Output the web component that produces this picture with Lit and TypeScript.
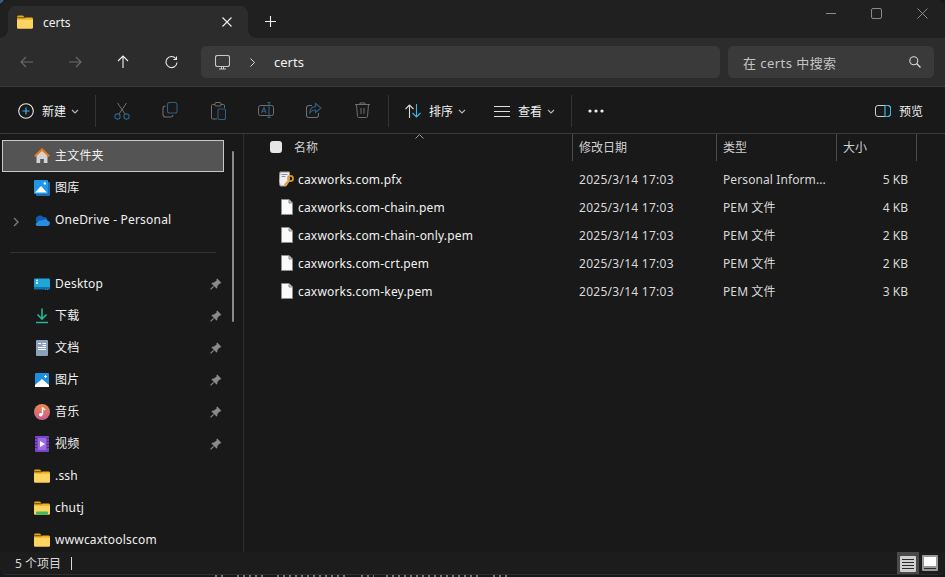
import { LitElement, html, css, svg, nothing } from 'lit';
import { customElement } from 'lit/decorators.js';

// ── Explorer window ───────────────────────────────────────────────────────────

const blue = '#3fb2e8';
const i = (w: number, h: number, body: unknown) =>
  html`<svg width=${w} height=${h} viewBox="0 0 ${w} ${h}" fill="none">${body}</svg>`;

const folderIcon = (badge = false) =>
  i(16, 14, svg`
    <path d="M0 2.2C0 1 .8.4 1.8.4h3.4c.8 0 1.2.5 1.9 1.3L8 2.6H0z" fill="#e8a50c"/>
    <path d="M0 3.4h14.4c.9 0 1.6.7 1.6 1.5v7.3c0 1-.7 1.6-1.6 1.6H1.600C.7 13.800 0 13.200 0 12.200z" fill="#fcd462"/>
    <path d="M0 3.4h7.2l1.4-1H14.400c.9 0 1.600.6 1.600 1.400v1H0z" fill="#f2b31f"/>
    ${badge ? svg`<rect x="2" y="10.6" width="12" height="3.2" rx="1" fill="#42b85a"/>` : nothing}
  `);

const fileIcon = i(12, 16, svg`
  <path d="M.5.5h7.5l3.5 3.5v11.5H.5z" fill="#fafafa" stroke="#8d8d8d"/>
  <path d="M8 .8V4h3.2" fill="#c9c9c9" stroke="#8d8d8d"/>
`);

const certIcon = i(15, 16, svg`
  <path d="M1 1h9.5v9L7 15H1.200L0 10z" fill="#efefef" stroke="#a09a8a"/>
  <path d="M2.500 3.500h6M2.500 5.500h4" stroke="#7f93c0"/>
  <circle cx="11.500" cy="7.500" r="2.600" stroke="#e19a22" stroke-width="1.600"/>
  <path d="M9.800 9.500 5.500 14M7 11.500l1.500 1.500M5.800 13l1.200 1.200" stroke="#e19a22" stroke-width="1.500"/>
`);

const pin = i(12, 12, svg`
  <path d="M7.200.6 11.400 4.800 10.400 5.600 9.600 5.400 7.400 8 7.300 10 6.500 10.500 1.500 5.500 2 4.700 4 4.600 6.600 2.400 6.400 1.600z" fill="#8a8a8a"/>
  <path d="M3.600 8.400.6 11.400" stroke="#8a8a8a" stroke-width="1.200"/>
`);

const chevron = i(8, 5, svg`<path d="M1 1l3 3 3-3" stroke="#b8b8b8" stroke-width="1.100"/>`);

const homeIcon = i(16, 16, svg`
  <path d="M2.500 7.500 8 2.500l5.500 5V15H9.800v-4H6.200v4H2.500z" fill="#d3d3d3"/>
  <path d="M.8 8.300 8 1.500l7.200 6.800" stroke="#e9791c" stroke-width="2"/>
`);

const galleryIcon = i(16, 16, svg`
  <rect x="2" y="2" width="14" height="14" rx="1" fill="#1f6fb5"/>
  <rect width="14" height="14" rx="1" fill="#2196e6"/>
  <path d="M1 12.500 7 6l6 6.500z" fill="#fff"/>
  <circle cx="10.800" cy="3.400" r="1.200" fill="#fff"/>
`);

const cloudIcon = i(16, 11, svg`
  <path d="M2.500 7a4 4 0 0 1 6.800-4.800 3.500 3.500 0 0 1 4 2.800L6 10z" fill="#0f5fb0"/>
  <path d="M3 11h10.500a2.500 2.500 0 0 0 .6-4.900 3.300 3.300 0 0 0-5.200-.8L6.500 5.500a2.900 2.900 0 0 0-2.900 1.800A1.900 1.900 0 0 0 3 11z" fill="#2a8ee0"/>
`);

const desktopIcon = i(16, 12, svg`
  <rect y=".5" width="16" height="10.500" rx="1" fill="#1fa6d8"/>
  <rect y="9" width="16" height="2.500" fill="#0d76a8"/>
  <path d="M2 2.500h2M2 5h2" stroke="#fff" stroke-width="1.400"/>
  <rect x="11" y="11.500" width="1" height="1" fill="#bbb"/><rect x="13" y="11.500" width="1" height="1" fill="#bbb"/>
`);

const downloadIcon = i(12, 16, svg`
  <path d="M6 .5v10M1.500 6.500 6 11l4.500-4.500" stroke="#27b592" stroke-width="1.600"/>
  <path d="M0 14.500h12" stroke="#27b592" stroke-width="1.500"/>
`);

const docIcon = i(12, 16, svg`
  <rect width="12" height="16" rx="1" fill="#8ba2bd"/>
  <path d="M2 3.500h3M6.500 3.500h3.500M6.500 5.500h3.500M2 7.500h8M2 9.500h8" stroke="#fff"/>
`);

const pictureIcon = i(14, 14, svg`
  <rect width="14" height="14" rx="1" fill="#1d8fe0"/>
  <path d="M0 12 7 6l7 6v2H0z" fill="#fff"/>
  <path d="M10.500 2v3M9 3.500h3" stroke="#fff"/>
`);

const musicIcon = i(16, 16, svg`
  <defs><linearGradient id="mu" x1="0" y1="0" x2="0" y2="1"><stop offset="0" stop-color="#e98a4a"/><stop offset="1" stop-color="#c85a96"/></linearGradient></defs>
  <circle cx="8" cy="8" r="8" fill="url(#mu)"/>
  <path d="M8.500 3.500v7" stroke="#fff" stroke-width="1.400"/>
  <circle cx="6.800" cy="10.800" r="1.800" fill="#fff"/>
  <path d="M8.500 3.500c.5 1.500 2 1.500 2.500 2.500" stroke="#fff" stroke-width="1.200"/>
`);

const videoIcon = i(14, 16, svg`
  <rect width="14" height="16" rx="1" fill="#7a45c8"/>
  <rect x="3" y="2" width="8" height="12" fill="#9a6be0"/>
  <path d="M5 5l5 3-5 3z" fill="#fff"/>
  <path d="M1 2v1M1 5v1M1 8v1M1 11v1M13 2v1M13 5v1M13 8v1M13 11v1" stroke="#2c1a55" stroke-width="1.200"/>
`);

const sideTop = [
  { name: '主文件夹', icon: homeIcon, selected: true },
  { name: '图库', icon: galleryIcon },
  { name: 'OneDrive - Personal', icon: cloudIcon, expand: true },
];

const sideQuick = [
  { name: 'Desktop', icon: desktopIcon, pinned: true },
  { name: '下载', icon: downloadIcon, pinned: true },
  { name: '文档', icon: docIcon, pinned: true },
  { name: '图片', icon: pictureIcon, pinned: true },
  { name: '音乐', icon: musicIcon, pinned: true },
  { name: '视频', icon: videoIcon, pinned: true },
  { name: '.ssh', icon: folderIcon() },
  { name: 'chutj', icon: folderIcon(true) },
  { name: 'wwwcaxtoolscom', icon: folderIcon() },
];

const files = [
  { name: 'caxworks.com.pfx', icon: certIcon, type: 'Personal Inform...', size: '5 KB' },
  { name: 'caxworks.com-chain.pem', icon: fileIcon, type: 'PEM 文件', size: '4 KB' },
  { name: 'caxworks.com-chain-only.pem', icon: fileIcon, type: 'PEM 文件', size: '2 KB' },
  { name: 'caxworks.com-crt.pem', icon: fileIcon, type: 'PEM 文件', size: '2 KB' },
  { name: 'caxworks.com-key.pem', icon: fileIcon, type: 'PEM 文件', size: '3 KB' },
];

// tips of whatever sits behind the window, showing below its bottom edge
const behind = [10, 28, 72, 13, 95, 15];

const dim = '#6f6f6f';
const dimBlue = '#2c5f80';
const toolIcons = [
  i(16, 18, svg`<path d="M3.500 1 11 12M12.500 1 5 12" stroke="${dim}"/><circle cx="3.500" cy="14.500" r="2.600" stroke="${dimBlue}" stroke-width="1.200"/><circle cx="12.500" cy="14.500" r="2.600" stroke="${dimBlue}" stroke-width="1.200"/>`),
  i(16, 16, svg`<rect x="5.500" y=".5" width="9.500" height="10.500" rx="2" stroke="${dimBlue}" stroke-width="1.100"/><path d="M3.500 4A2.500 2.500 0 0 0 1 6.500v6A2.500 2.500 0 0 0 3.500 15h5.500A2.500 2.500 0 0 0 11 13" stroke="${dim}" stroke-width="1.100"/>`),
  i(15, 18, svg`<path d="M4 2.500H1.500A1 1 0 0 0 .5 3.500V16a1 1 0 0 0 1 1H6M10 2.500h2.500a1 1 0 0 1 1 1V6" stroke="${dim}"/><rect x="4" y=".5" width="6" height="3.500" rx="1" stroke="${dim}"/><rect x="7" y="7" width="7.500" height="10.500" rx="1.500" stroke="${dimBlue}" stroke-width="1.100"/>`),
  i(16, 16, svg`<rect x=".5" y="3.500" width="15" height="10" rx="2" stroke="${dim}"/><path d="M3.500 11 6 5.500 8 11M4.300 9.200h3.200" stroke="${dimBlue}" stroke-width="1.100"/><path d="M11 1v14M9.500 .5h3M9.500 15.500h3" stroke="${dimBlue}" stroke-width="1.100"/>`),
  i(16, 16, svg`<path d="M6 3.500H3A2.500 2.500 0 0 0 .5 6v7A2.500 2.500 0 0 0 3 15.500h7a2.500 2.500 0 0 0 2.500-2.500v-2" stroke="${dim}" stroke-width="1.100"/><path d="M9.500 1.500 15 6l-5.500 4.500V8C7 8 5 9 3.500 11.500 4 7 6.500 4.500 9.500 4.500z" stroke="${dimBlue}" stroke-width="1.100"/>`),
  i(15, 16, svg`<path d="M0 2.500h15M5 2.500V1h5v1.500M1.500 2.500l1 12a1 1 0 0 0 1 1h8a1 1 0 0 0 1-1l1-12M6 6v6M9 6v6" stroke="${dim}"/>`),
];

@customElement('app-root')
export class AppRoot extends LitElement {
  static styles = css`
    :host {
      display: block;
      width: 945px;
      height: 577px;
      overflow: hidden;
      background: radial-gradient(circle at 0 0, #3a5a8a 3px, #191919 4px);
      font-family: 'Noto Sans', 'Noto Sans CJK SC', sans-serif;
      font-size: 12px;
      color: #f0f0f0;
    }
    svg { display: block; flex: none; }
    .window {
      height: 575px;
      box-sizing: border-box;
      display: flex;
      flex-direction: column;
      border-radius: 8px;
      border-bottom: 1px solid #2e2e2e;
      overflow: hidden;
      background: #191919;
    }

    /* title bar */
    .titlebar {
      height: 38px;
      flex: none;
      display: flex;
      background: #202020;
      padding-left: 8px;
    }
    .tab {
      position: relative;
      margin-top: 6px;
      width: 240px;
      height: 32px;
      box-sizing: border-box;
      padding: 0 16px 0 9px;
      display: flex;
      align-items: center;
      background: #2c2c2c;
      border-radius: 8px 8px 0 0;
    }
    .tab::before,
    .tab::after {
      content: '';
      position: absolute;
      bottom: 0;
      width: 8px;
      height: 8px;
    }
    .tab::before {
      left: -8px;
      background: radial-gradient(circle at 0 0, #202020 7.5px, #2c2c2c 8px);
    }
    .tab::after {
      right: -8px;
      background: radial-gradient(circle at 100% 0, #202020 7.5px, #2c2c2c 8px);
    }
    .tab .label { margin-left: 10px; flex: 1; }
    .newtab { margin: 16px 0 0 17px; }
    .wincontrols {
      margin-left: auto;
      display: flex;
      gap: 35px;
      padding: 8px 17px 0 0;
    }
    .minimize { padding-top: 5px; }

    /* navigation bar */
    .nav {
      height: 48px;
      flex: none;
      display: flex;
      align-items: center;
      background: #2c2c2c;
      border-bottom: 1px solid #3a3a3a;
      padding-left: 3px;
    }
    .navbtn { width: 48px; display: flex; justify-content: center; }
    .address {
      margin-left: 6px;
      width: 519px;
      height: 32px;
      box-sizing: border-box;
      padding-left: 14px;
      display: flex;
      align-items: center;
      background: #3a3a3a;
      border-radius: 5px;
      font-size: 13px;
    }
    .address .sep { margin: 0 19px 0 20px; }
    .search {
      margin-left: 8px;
      width: 206px;
      height: 32px;
      box-sizing: border-box;
      padding: 0 13px 0 15px;
      display: flex;
      align-items: center;
      justify-content: space-between;
      background: #3a3a3a;
      border-radius: 5px;
      font-size: 13px;
      letter-spacing: 0.45px;
      color: #c4c4c4;
    }

    /* command bar */
    .toolbar {
      height: 47px;
      flex: none;
      display: flex;
      align-items: center;
      background: #191919;
      border-bottom: 1px solid #3a3a3a;
      padding: 2px 0 0 18px;
      box-sizing: border-box;
    }
    .cmd { display: flex; align-items: center; flex: none; }
    .cmd.new { width: 77px; }
    .cmd.sort { width: 89px; margin-left: 16px; }
    .cmd.view { width: 77px; }
    .cmd .text { margin: 0 5px 0 8px; }
    .vsep { width: 1px; height: 32px; background: #333; flex: none; }
    .tools { display: flex; padding: 0 2px; }
    .toolbtn { width: 48px; display: flex; justify-content: center; flex: none; }
    .more { margin-left: 16px; }
    .preview { margin-left: auto; margin-right: 22px; display: flex; align-items: center; gap: 8px; }

    /* body */
    .main { flex: 1; min-height: 0; display: flex; }
    .sidebar {
      width: 244px;
      flex: none;
      box-sizing: border-box;
      border-right: 1px solid #2e2e2e;
      padding: 6px 0 0 2px;
      overflow: hidden;
      position: relative;
    }
    .siderow {
      width: 222px;
      height: 32px;
      box-sizing: border-box;
      display: flex;
      align-items: center;
      padding-left: 32px;
      position: relative;
    }
    .siderow.selected {
      background: #545454;
      border: 1px solid #c8c8c8;
      padding-left: 31px;
    }
    .siderow .icon { width: 16px; display: flex; justify-content: center; flex: none; }
    .siderow .label { margin-left: 5px; flex: 1; transform: translateY(-1px); letter-spacing: 0.2px; }
    .siderow .pin { margin-right: 2px; }
    .siderow .expand { position: absolute; left: 11px; top: 13px; }
    .sidedivider { height: 32px; display: flex; align-items: center; padding-left: 8px; }
    .sidedivider div { width: 206px; height: 1px; background: #333; }
    .scroll {
      position: absolute;
      left: 232px;
      top: 17px;
      width: 2px;
      height: 171px;
      background: #8a8a8a;
      border-radius: 1px;
    }

    .list { flex: 1; position: relative; overflow: hidden; }
    .header {
      height: 27px;
      display: grid;
      grid-template-columns: 329px 144px 120px 80px;
      color: #d0d0d0;
    }
    .hcell {
      border-right: 1px solid #4a4a4a;
      padding: 0 0 2px 6px;
      display: flex;
      align-items: center;
      box-sizing: border-box;
    }
    .hcell.name { padding-left: 26px; }
    .check {
      width: 12px;
      height: 12px;
      background: #e6e6e6;
      border-radius: 3px;
      margin-right: 12px;
    }
    .caret { position: absolute; left: 171px; top: 0; }
    .rows { padding-top: 4px; }
    .row {
      height: 28px;
      display: grid;
      grid-template-columns: 329px 144px 120px 71px;
      align-items: center;
      color: #d8d8d8;
    }
    .row > div { padding-left: 6px; }
    .row .fname { display: flex; align-items: center; color: #f0f0f0; padding-left: 35px; letter-spacing: 0.18px; }
    .row .ficon { width: 15px; display: flex; justify-content: center; margin-right: 4px; }
    .row .date { letter-spacing: 0.27px; }
    .row .type { letter-spacing: 0.1px; }
    .row .size { text-align: right; padding: 0; }

    /* status bar */
    .status {
      height: 22px;
      flex: none;
      display: flex;
      align-items: center;
      background: #1c1c1c;
      padding-left: 15px;
      color: #d8d8d8;
    }
    .caretline { width: 1px; height: 13px; background: #d8d8d8; margin-left: 10px; }
    .views { margin-left: auto; margin-right: 7px; display: flex; align-items: center; gap: 3px; }
    .viewbtn { width: 22px; height: 22px; box-sizing: border-box; display: flex; align-items: center; justify-content: center; }
    .viewbtn.on { background: #4a4a4a; padding-top: 2px; }
    .viewbtn.plain { width: 16px; height: 16px; }

    .behind { height: 2px; display: flex; gap: 12px; padding-left: 215px; }
    .behind span {
      height: 2px;
      background: repeating-linear-gradient(90deg, #7a7a7a 0 2px, transparent 2px 6px);
    }
  `;

  private sideRow(r: { name: string; icon: unknown; selected?: boolean; pinned?: boolean; expand?: boolean }) {
    return html`<div class="siderow ${r.selected ? 'selected' : ''}">
      ${r.expand
        ? html`<span class="expand">${i(6, 10, svg`<path d="M1 1l4 4-4 4" stroke="#7a7a7a" stroke-width="1.400"/>`)}</span>`
        : nothing}
      <span class="icon">${r.icon}</span>
      <span class="label">${r.name}</span>
      ${r.pinned ? html`<span class="pin">${pin}</span>` : nothing}
    </div>`;
  }

  render() {
    return html`
      <div class="window">
        <div class="titlebar">
          <div class="tab">
            ${folderIcon()}
            <span class="label">certs</span>
            ${i(10, 10, svg`<path d="M.5.5l9 9M9.5.5l-9 9" stroke="#f0f0f0" stroke-width="1.100"/>`)}
          </div>
          <div class="newtab">
            ${i(11, 11, svg`<path d="M5.5 0v11M0 5.500h11" stroke="#f0f0f0" stroke-width="1.100"/>`)}
          </div>
          <div class="wincontrols">
            <span class="minimize">${i(10, 1, svg`<path d="M0 .5h10" stroke="#8a8a8a"/>`)}</span>
            ${i(11, 11, svg`<rect x=".5" y=".5" width="10" height="10" rx="1.500" stroke="#8a8a8a"/>`)}
            ${i(11, 11, svg`<path d="M.5.5l10 10M10.500.5l-10 10" stroke="#8a8a8a"/>`)}
          </div>
        </div>

        <div class="nav">
          <div class="navbtn">${i(14, 12, svg`<path d="M13 6H1M6 1 1 6l5 5" stroke="#6a6a6a" stroke-width="1.100"/>`)}</div>
          <div class="navbtn">${i(14, 12, svg`<path d="M1 6h12M8 1l5 5-5 5" stroke="#6a6a6a" stroke-width="1.100"/>`)}</div>
          <div class="navbtn">${i(12, 14, svg`<path d="M6 13V1M1 6l5-5 5 5" stroke="#f0f0f0" stroke-width="1.100"/>`)}</div>
          <div class="navbtn">${i(13, 13, svg`<path d="M10.800 2.600A5.500 5.500 0 1 0 12 6.500" stroke="#e8e8e8" stroke-width="1.100"/><path d="M11.500.5v3h-3" stroke="#e8e8e8" stroke-width="1.100"/>`)}</div>
          <div class="address">
            ${i(15, 15, svg`<rect x=".5" y=".5" width="14" height="11" rx="2" stroke="#c8c8c8" stroke-width="1.100"/><path d="M4 14h7M6.500 12v2M8.500 12v2" stroke="#c8c8c8"/>`)}
            <span class="sep">${i(5, 9, svg`<path d="M.5.5l4 4-4 4" stroke="#d8d8d8"/>`)}</span>
            <span>certs</span>
          </div>
          <div class="search">
            <span>在 certs 中搜索</span>
            ${i(12, 12, svg`<circle cx="4.800" cy="4.800" r="4" stroke="#d8d8d8" stroke-width="1.100"/><path d="M7.800 7.800 11.500 11.500" stroke="#d8d8d8" stroke-width="1.300"/>`)}
          </div>
        </div>

        <div class="toolbar">
          <div class="cmd new">
            ${i(16, 16, svg`<circle cx="8" cy="8" r="7.300" stroke="#e8e8e8" stroke-width="1.100"/><path d="M8 4.500v7M4.500 8h7" stroke="${blue}" stroke-width="1.200"/>`)}
            <span class="text">新建</span>${chevron}
          </div>
          <div class="vsep"></div>
          <div class="tools">${toolIcons.map(ic => html`<div class="toolbtn">${ic}</div>`)}</div>
          <div class="vsep"></div>
          <div class="cmd sort">
            ${i(16, 14, svg`<path d="M4.500 14V1M.5 5l4-4 4 4" stroke="#d8d8d8" stroke-width="1.100"/><path d="M11.500 0v13M7.500 9l4 4 4-4" stroke="${blue}" stroke-width="1.100"/>`)}
            <span class="text">排序</span>${chevron}
          </div>
          <div class="cmd view">
            ${i(16, 11, svg`<path d="M0 .5h16M0 5.500h16M0 10.500h16" stroke="#e0e0e0"/>`)}
            <span class="text">查看</span>${chevron}
          </div>
          <div class="vsep"></div>
          <div class="more">
            ${i(16, 4, svg`<circle cx="2" cy="2" r="1.600" fill="#f0f0f0"/><circle cx="8" cy="2" r="1.600" fill="#f0f0f0"/><circle cx="14" cy="2" r="1.600" fill="#f0f0f0"/>`)}
          </div>
          <div class="preview">
            ${i(16, 12, svg`<rect x=".5" y=".5" width="15" height="11" rx="2.500" stroke="#cfcfcf"/><path d="M10 .5v11" stroke="${blue}" stroke-width="1.200"/><path d="M10 .5h3a2.500 2.500 0 0 1 2.500 2.500v6a2.500 2.500 0 0 1-2.500 2.500h-3" stroke="${blue}"/>`)}
            <span>预览</span>
          </div>
        </div>

        <div class="main">
          <div class="sidebar">
            ${sideTop.map(r => this.sideRow(r))}
            <div class="sidedivider"><div></div></div>
            ${sideQuick.map(r => this.sideRow(r))}
            <div class="scroll"></div>
          </div>

          <div class="list">
            <div class="header">
              <div class="hcell name"><span class="check"></span>名称</div>
              <div class="hcell">修改日期</div>
              <div class="hcell">类型</div>
              <div class="hcell">大小</div>
            </div>
            <span class="caret">${i(9, 5, svg`<path d="M.5 4.500 4.500.5l4 4" stroke="#9a9a9a"/>`)}</span>
            <div class="rows">
              ${files.map(
                f => html`<div class="row">
                  <div class="fname"><span class="ficon">${f.icon}</span>${f.name}</div>
                  <div class="date">2025/3/14 17:03</div>
                  <div class="type">${f.type}</div>
                  <div class="size">${f.size}</div>
                </div>`,
              )}
            </div>
          </div>
        </div>

        <div class="status">
          <span>5 个项目</span>
          <span class="caretline"></span>
          <div class="views">
            <div class="viewbtn on">
              ${i(16, 16, svg`<rect width="16" height="16" rx="1" fill="#cfcfcf"/><path d="M2 3.500h12M2 6.500h12M2 9.500h12M2 12.500h12" stroke="#2a2a2a"/>`)}
            </div>
            <div class="viewbtn plain">
              ${i(16, 16, svg`<rect width="16" height="16" rx="1" fill="#9a9a9a"/><rect x="2" y="2" width="12" height="9" fill="#fff"/><path d="M2 13.500h12" stroke="#2a2a2a"/>`)}
            </div>
          </div>
        </div>
      </div>
      <div class="behind">${behind.map(w => html`<span style="width:${w}px"></span>`)}</div>
    `;
  }
}
